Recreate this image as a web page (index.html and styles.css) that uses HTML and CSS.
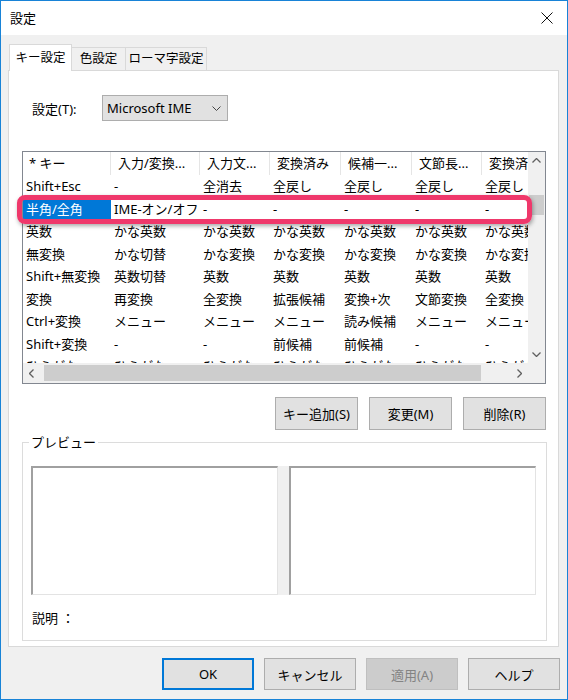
FILE: index.html
```html
<!DOCTYPE html>
<html lang="ja">
<head>
<meta charset="utf-8">
<title>設定</title>
<link rel="stylesheet" href="styles.css">
</head>
<body>
<div class="window">
  <div class="titlebar">
    <span class="title">設定</span>
    <svg class="close" width="12" height="12" viewBox="0 0 12 12"><path d="M0.5 0.5L11.5 11.5M11.5 0.5L0.5 11.5" stroke="#111" stroke-width="1" fill="none"/></svg>
  </div>
  <div class="body">
    <div class="tabs">
      <div class="tab active">キー設定</div>
      <div class="tab t2">色設定</div>
      <div class="tab t3">ローマ字設定</div>
    </div>
    <div class="panel">
      <div class="setting-row">
        <span class="label">設定(T):</span>
        <div class="select">
          <span>Microsoft IME</span>
          <svg width="9" height="5" viewBox="0 0 9 5"><path d="M0.5 0.5L4.5 4.5L8.5 0.5" stroke="#444" stroke-width="1" fill="none"/></svg>
        </div>
      </div>
      <div class="list">
        <div class="view">
          <div class="row head">
            <div class="cell first">* キー</div>
            <div class="cell">入力/変換...</div>
            <div class="cell">入力文...</div>
            <div class="cell">変換済み</div>
            <div class="cell">候補一...</div>
            <div class="cell">文節長...</div>
            <div class="cell">変換済み...</div>
          </div>
          <div class="row"><div class="cell">Shift+Esc</div><div class="cell">-</div><div class="cell">全消去</div><div class="cell">全戻し</div><div class="cell">全戻し</div><div class="cell">全戻し</div><div class="cell">全戻し</div></div>
          <div class="row"><div class="cell sel">半角/全角</div><div class="cell">IME-オン/オフ</div><div class="cell">-</div><div class="cell">-</div><div class="cell">-</div><div class="cell">-</div><div class="cell">-</div></div>
          <div class="row"><div class="cell">英数</div><div class="cell">かな英数</div><div class="cell">かな英数</div><div class="cell">かな英数</div><div class="cell">かな英数</div><div class="cell">かな英数</div><div class="cell">かな英数</div></div>
          <div class="row"><div class="cell">無変換</div><div class="cell">かな切替</div><div class="cell">かな変換</div><div class="cell">かな変換</div><div class="cell">かな変換</div><div class="cell">かな変換</div><div class="cell">かな変換</div></div>
          <div class="row"><div class="cell">Shift+無変換</div><div class="cell">英数切替</div><div class="cell">英数</div><div class="cell">英数</div><div class="cell">英数</div><div class="cell">英数</div><div class="cell">英数</div></div>
          <div class="row"><div class="cell">変換</div><div class="cell">再変換</div><div class="cell">全変換</div><div class="cell">拡張候補</div><div class="cell">変換+次</div><div class="cell">文節変換</div><div class="cell">全変換</div></div>
          <div class="row"><div class="cell">Ctrl+変換</div><div class="cell">メニュー</div><div class="cell">メニュー</div><div class="cell">メニュー</div><div class="cell">読み候補</div><div class="cell">メニュー</div><div class="cell">メニュー</div></div>
          <div class="row"><div class="cell">Shift+変換</div><div class="cell">-</div><div class="cell">-</div><div class="cell">前候補</div><div class="cell">前候補</div><div class="cell">-</div><div class="cell">-</div></div>
          <div class="row"><div class="cell">ひらがな</div><div class="cell">ひらがな</div><div class="cell">ひらがな</div><div class="cell">ひらがな</div><div class="cell">ひらがな</div><div class="cell">ひらがな</div><div class="cell">ひらがな</div></div>
        </div>
        <div class="vbar">
          <div class="arrow"><svg width="9" height="5" viewBox="0 0 9 5"><path d="M0.5 4.5L4.5 0.5L8.5 4.5" stroke="#606060" stroke-width="1.3" fill="none"/></svg></div>
          <div class="vgap"></div>
          <div class="vthumb"></div>
          <div class="fill"></div>
          <div class="arrow"><svg width="9" height="5" viewBox="0 0 9 5"><path d="M0.5 0.5L4.5 4.5L8.5 0.5" stroke="#606060" stroke-width="1.3" fill="none"/></svg></div>
        </div>
        <div class="hbar">
          <div class="arrow"><svg width="5" height="9" viewBox="0 0 5 9"><path d="M4.5 0.5L0.5 4.5L4.5 8.5" stroke="#606060" stroke-width="1.3" fill="none"/></svg></div>
          <div class="hthumb"></div>
          <div class="fill"></div>
          <div class="arrow"><svg width="5" height="9" viewBox="0 0 5 9"><path d="M0.5 0.5L4.5 4.5L0.5 8.5" stroke="#606060" stroke-width="1.3" fill="none"/></svg></div>
        </div>
        <div class="corner"></div>
      </div>
      <div class="btn-row">
        <button class="btn">キー追加(S)</button>
        <button class="btn">変更(M)</button>
        <button class="btn">削除(R)</button>
      </div>
      <div class="group">
        <div class="group-label">プレビュー</div>
        <div class="previews">
          <div class="pbox"></div>
          <div class="split"></div>
          <div class="pbox"></div>
        </div>
        <div class="desc">説明 ：</div>
      </div>
    </div>
    <div class="footer">
      <button class="btn fbtn default">OK</button>
      <button class="btn fbtn">キャンセル</button>
      <button class="btn fbtn disabled">適用(A)</button>
      <button class="btn fbtn">ヘルプ</button>
    </div>
  </div>
  <div class="annot"></div>
</div>
</body>
</html>
```

FILE: styles.css
```css
* { box-sizing: border-box; }
html, body { margin: 0; padding: 0; background: #fff; }
body {
  font-family: "Noto Sans", "Noto Sans CJK JP", sans-serif;
  font-size: 13px;
  color: #000;
}
.window {
  width: 568px;
  height: 700px;
  border: 1px solid #1883d7;
  background: #f0f0f0;
  position: relative;
  display: flex;
  flex-direction: column;
}
.titlebar {
  flex: none;
  height: 34px;
  background: #fff;
  display: flex;
  align-items: center;
  justify-content: space-between;
  padding: 0 14px 0 9px;
}
.title { font-size: 13px; line-height: 16px; }
.close { display: block; }
.body {
  flex: 1;
  padding: 9px 8px 0 7px;
}
.tabs {
  display: flex;
  align-items: flex-end;
  height: 26px;
  padding-left: 1px;
  position: relative;
  z-index: 1;
}
.tab {
  height: 23px;
  border: 1px solid #d9d9d9;
  border-bottom: none;
  background: #f0f0f0;
  text-align: center;
  line-height: 22px;
  font-size: 12.5px;
  margin-left: -1px;
}
.tab.active {
  width: 63px;
  height: 27px;
  line-height: 26px;
  background: #fff;
  margin-left: 0;
  margin-bottom: -1px;
  position: relative;
  z-index: 2;
}
.tab.t2 { width: 55px; }
.tab.t3 { width: 82px; }
.panel {
  background: #fff;
  border: 1px solid #d9d9d9;
  height: 577px;
  padding: 0 11px 0 13px;
}
.setting-row {
  display: flex;
  align-items: center;
  margin-top: 24px;
  padding-left: 10px;
  height: 26px;
}
.label { width: 70px; }
.select {
  width: 126px;
  height: 26px;
  border: 1px solid #adadad;
  background: #e1e1e1;
  display: flex;
  align-items: center;
  justify-content: space-between;
  padding: 0 6px 0 4px;
}
.select svg { display: block; }
.list {
  margin-top: 30px;
  width: 524px;
  height: 233px;
  border: 1px solid #828790;
  display: grid;
  grid-template-columns: 505px 17px;
  grid-template-rows: 211px 20px;
}
.view { overflow: hidden; background: #fff; }
.row {
  display: grid;
  grid-template-columns: 88px 89px 70px 71px 71px 70px 90px;
  height: 22.5px;
  line-height: 22.5px;
  white-space: nowrap;
}
.row.head { height: 23px; line-height: 23px; }
.cell { padding-left: 3px; overflow: hidden; }
.head .cell { padding-left: 7px; border-right: 1px solid #e5e5e5; }
.head .cell.first { padding-left: 6px; }
.cell.sel { background: #0078d7; color: #fff; }
.vbar {
  background: #f0f0f0;
  display: flex;
  flex-direction: column;
}
.vbar .arrow { height: 17px; }
.vgap { height: 26px; }
.vthumb { height: 20px; background: #cdcdcd; margin: 0 1px; }
.fill { flex: 1; }
.arrow {
  display: flex;
  align-items: center;
  justify-content: center;
}
.arrow svg { display: block; }
.hbar {
  background: #f0f0f0;
  display: flex;
}
.hbar .arrow { width: 17px; }
.hthumb { width: 437px; margin: 2px 0 2px 4px; background: #cdcdcd; }
.corner { background: #f0f0f0; }
.btn-row {
  display: flex;
  justify-content: flex-end;
  gap: 11px;
  margin-top: 13px;
  width: 524px;
}
.btn {
  height: 33px;
  width: 83px;
  border: 1px solid #adadad;
  background: #e1e1e1;
  font-family: inherit;
  font-size: 13px;
  color: #000;
  padding: 0;
}
.group {
  margin-top: 12px;
  width: 525px;
  height: 199px;
  border: 1px solid #dcdcdc;
}
.group-label {
  margin: -9px 0 0 6px;
  padding: 0 2px;
  background: #fff;
  width: fit-content;
  line-height: 17px;
}
.previews {
  display: flex;
  margin: 15px 0 0 8px;
  height: 129px;
}
.pbox {
  width: 247px;
  background: #fff;
  border-top: 2px solid #a0a0a0;
  border-left: 2px solid #a0a0a0;
  border-right: 1px solid #e3e3e3;
  border-bottom: 1px solid #e3e3e3;
}
.split { width: 11px; background: #f0f0f0; }
.desc { margin: 15px 0 0 9px; line-height: 17px; }
.footer {
  display: flex;
  justify-content: flex-end;
  gap: 10px;
  margin-top: 11px;
  margin-right: -1px;
}
.fbtn { width: 92px; height: 32px; }
.fbtn.default { border: 2px solid #0078d7; }
.fbtn.disabled { background: #cccccc; border-color: #bfbfbf; color: #838383; }
.annot {
  position: absolute;
  left: 16px;
  top: 194px;
  width: 515px;
  height: 29px;
  border: 5px solid #ef386b;
  border-radius: 8px;
  box-shadow: 1px 2px 4px rgba(0, 0, 0, 0.35);
}
```
